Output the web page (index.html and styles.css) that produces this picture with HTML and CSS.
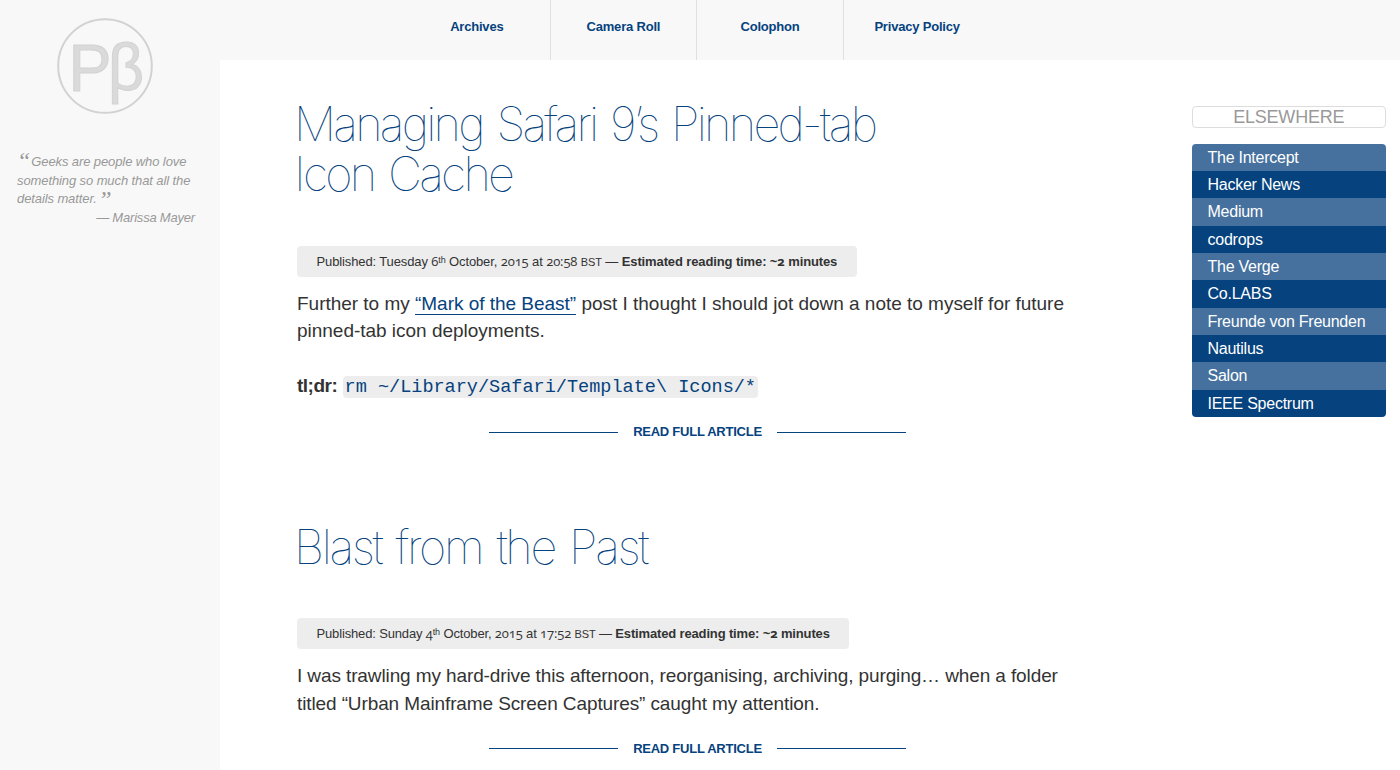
FILE: index.html
```html
<!DOCTYPE html>
<html lang="en">
<head>
    <meta charset="UTF-8">
    <meta name="viewport" content="width=device-width, initial-scale=1.0">
    <title>Pβ</title>
    <link rel="stylesheet" href="styles.css">
</head>
<body>

    <div id="sidebar">
        <a href="#" class="logo">
            <svg width="96" height="96" viewBox="0 0 96 96">
                <circle cx="48" cy="48" r="46.8" fill="none" stroke="#d2d2d2" stroke-width="2"/>
                <text x="11.5" y="72.5" textLength="43" lengthAdjust="spacingAndGlyphs">P</text>
                <text x="51" y="72" textLength="36" lengthAdjust="spacingAndGlyphs">β</text>
            </svg>
        </a>
        <blockquote>
            <span class="mark">“</span>Geeks are people who love<br>
            something so much that all the<br>
            details matter. <span class="mark close">”</span>
            <cite>— Marissa Mayer</cite>
        </blockquote>
    </div>

    <div id="page">
        <nav>
            <a href="#">Archives</a>
            <a href="#">Camera Roll</a>
            <a href="#">Colophon</a>
            <a href="#">Privacy Policy</a>
        </nav>

        <div id="content">
            <main>
                <article>
                    <h1>Managing Safari 9’s Pinned-tab<br>Icon Cache</h1>
                    <p class="meta">Published: Tuesday <i>6</i><sup>th</sup> October, <i>2015</i> at <i>20:58</i> <small>BST</small> — <b>Estimated reading time: ~<i>2</i> minutes</b></p>
                    <p>Further to my <a href="#">“Mark of the Beast”</a> post I thought I should jot down a note to myself for future<br>pinned-tab icon deployments.</p>
                    <p class="tldr"><b>tl;dr:</b> <code>rm ~/Library/Safari/Template\ Icons/*</code></p>
                    <a href="#" class="more">READ FULL ARTICLE</a>
                </article>

                <article class="older">
                    <h1>Blast from the Past</h1>
                    <p class="meta">Published: Sunday <i>4</i><sup>th</sup> October, <i>2015</i> at <i>17:52</i> <small>BST</small> — <b>Estimated reading time: ~<i>2</i> minutes</b></p>
                    <p>I was trawling my hard-drive this afternoon, reorganising, archiving, purging… when a folder<br>titled “Urban Mainframe Screen Captures” caught my attention.</p>
                    <a href="#" class="more">READ FULL ARTICLE</a>
                </article>
            </main>

            <aside>
                <h2>ELSEWHERE</h2>
                <ul>
                    <li><a href="#">The Intercept</a></li>
                    <li><a href="#">Hacker News</a></li>
                    <li><a href="#">Medium</a></li>
                    <li><a href="#">codrops</a></li>
                    <li><a href="#">The Verge</a></li>
                    <li><a href="#">Co.LABS</a></li>
                    <li><a href="#">Freunde von Freunden</a></li>
                    <li><a href="#">Nautilus</a></li>
                    <li><a href="#">Salon</a></li>
                    <li><a href="#">IEEE Spectrum</a></li>
                </ul>
            </aside>
        </div>
    </div>

</body>
</html>
```
FILE: styles.css
```css
* {
    box-sizing: border-box;
}
body {
    display: flex;
    height: 100vh;
    margin: 0;
    overflow: hidden;
    background-color: #f8f8f8;
    color: #333;
    font-family: "Liberation Sans", Arial, sans-serif;
    font-size: 19px;
    line-height: 27.4px;
}
a {
    color: #05427e;
    text-decoration: none;
}

/* Sidebar */
#sidebar {
    width: 220px;
    flex: none;
    padding: 18px 25px 0 17px;
}
.logo {
    display: block;
    width: 96px;
    height: 96px;
    margin-left: 40px;
}
.logo svg {
    display: block;
}
.logo text {
    font-size: 67px;
    fill: #dadada;
    stroke: #d2d2d2;
    stroke-width: 1px;
}
blockquote {
    margin: 39px 0 0;
    color: #999;
    font-size: 13px;
    font-style: italic;
    letter-spacing: -0.1px;
    line-height: 18.7px;
    white-space: nowrap;
}
.mark {
    margin-right: 1px;
    font-family: "Liberation Serif", serif;
    font-size: 24px;
    line-height: 0;
    vertical-align: -3px;
}
.mark.close {
    margin-left: -2px;
    vertical-align: -4px;
}
cite {
    display: block;
    letter-spacing: -0.2px;
    text-align: right;
}

/* Navigation */
#page {
    flex: 1;
    min-width: 0;
}
nav {
    display: flex;
    height: 60px;
    margin-left: 184px;
}
nav a {
    width: 146.6px;
    border-right: 1px solid #e0e0e0;
    font-size: 13px;
    font-weight: bold;
    letter-spacing: -0.2px;
    line-height: 54px;
    text-align: center;
}
nav a:last-child {
    border-right: 0;
}

/* Articles */
#content {
    display: flex;
    justify-content: space-between;
    height: 710px;
    padding: 46px 14.5px 0 77px;
    background-color: #fff;
}
main {
    width: 801px;
}
article {
    margin-bottom: 83px;
}
h1 {
    margin: -7px 0 46px -3px;
    color: #05427e;
    font-family: Inter, sans-serif;
    font-size: 47px;
    font-weight: 100;
    letter-spacing: -2.8px;
    line-height: 50.4px;
    white-space: nowrap;
    word-spacing: 3.3px;
}
p {
    margin: 0;
    letter-spacing: -0.02px;
    white-space: nowrap;
}
.meta {
    width: fit-content;
    height: 31px;
    margin-bottom: 13px;
    padding: 0 19.5px;
    border-radius: 4px;
    background-color: #ededed;
    font-size: 13px;
    letter-spacing: -0.12px;
    line-height: 31px;
}
.meta i {
    font-family: "Open Sans", sans-serif;
    font-style: normal;
    font-feature-settings: "onum";
}
.meta sup {
    font-size: 9px;
    line-height: 0;
    vertical-align: 3px;
}
.meta small {
    font-size: 11px;
}
p a {
    border-bottom: 1px solid #05427e;
}
.tldr {
    margin-top: 27.4px;
}
.tldr b {
    letter-spacing: -0.5px;
}
code {
    padding: 1px 2px 0;
    border-radius: 4px;
    background-color: #ededed;
    color: #05427e;
    font-family: "Liberation Mono", monospace;
    font-size: 18.55px;
    letter-spacing: 0;
}
.more {
    display: flex;
    justify-content: center;
    align-items: center;
    gap: 15px;
    margin-top: 17px;
    font-size: 13px;
    font-weight: bold;
    letter-spacing: -0.25px;
}
.more::before,
.more::after {
    content: "";
    width: 129px;
    height: 1px;
    background-color: #05427e;
}
.older h1 {
    letter-spacing: -2.4px;
    word-spacing: 3.4px;
}
.older p {
    letter-spacing: -0.11px;
}
.older .meta {
    letter-spacing: -0.15px;
}
.older .more {
    margin-top: 18px;
}

/* Links elsewhere */
aside {
    width: 193.5px;
}
h2 {
    height: 22px;
    margin: 0 0 15.5px;
    border: 1px solid #ddd;
    border-radius: 4px;
    color: #999;
    font-size: 18px;
    font-weight: normal;
    letter-spacing: -0.2px;
    line-height: 21px;
    text-align: center;
}
ul {
    margin: 0;
    padding: 0;
    overflow: hidden;
    border-radius: 4px;
    list-style: none;
}
li {
    height: 27.35px;
    padding-left: 15.5px;
    background-color: #05427e;
    font-size: 16px;
    letter-spacing: -0.25px;
}
li:nth-child(odd) {
    background-color: #46719e;
}
li a {
    color: #fff;
}
```
